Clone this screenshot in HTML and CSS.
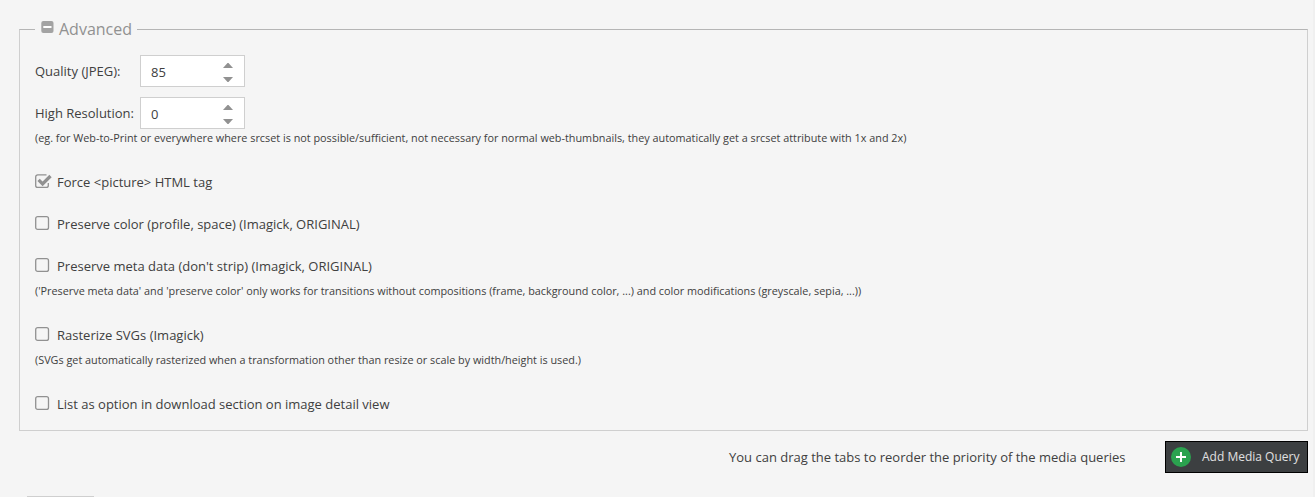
FILE: index.html
```html
<!DOCTYPE html>
<html lang="en">
<head>
  <meta charset="UTF-8">
  <meta name="viewport" content="width=device-width, initial-scale=1.0">
  <title>Thumbnail Settings</title>
  <link rel="stylesheet" href="styles.css">
</head>
<body>
  <div class="panel">
    <fieldset class="advanced">
      <legend>
        <svg class="collapse" width="13" height="12" viewBox="0 0 13 12">
          <rect x="0.3" width="12.2" height="12" rx="2" fill="#a3a3a3"></rect>
          <rect x="2.3" y="5" width="8.2" height="2" fill="#fff"></rect>
        </svg>
        <span>Advanced</span>
      </legend>

      <div class="row">
        <label class="field-label" for="quality">Quality (JPEG):</label>
        <div class="spinner">
          <input type="text" id="quality" value="85">
          <svg width="10" height="20" viewBox="0 0 10 20" fill="#919191">
            <path d="M0 6L4.5 1h1L10 6z"></path>
            <path d="M0 15h10L5.5 20h-1z"></path>
          </svg>
        </div>
      </div>

      <div class="row">
        <label class="field-label" for="resolution">High Resolution:</label>
        <div class="spinner">
          <input type="text" id="resolution" value="0">
          <svg width="10" height="20" viewBox="0 0 10 20" fill="#919191">
            <path d="M0 6L4.5 1h1L10 6z"></path>
            <path d="M0 15h10L5.5 20h-1z"></path>
          </svg>
        </div>
      </div>
      <p class="note">(eg. for Web-to-Print or everywhere where srcset is not possible/sufficient, not necessary for normal web-thumbnails, they automatically get a srcset attribute with 1x and 2x)</p>

      <div class="row check">
        <svg width="17" height="15" viewBox="0 0 17 15" fill="none" stroke="#919191">
          <path d="M11.5 0.9H2.7a2 2 0 0 0-2 2v8.5a2 2 0 0 0 2 2h8.6a2 2 0 0 0 2-2V9" stroke-width="1.3"></path>
          <path d="M3.6 5.9l4 4L15.5 2" stroke-width="3.3"></path>
        </svg>
        <span>Force &lt;picture&gt; HTML tag</span>
      </div>

      <div class="row check">
        <svg width="17" height="15" viewBox="0 0 17 15" fill="none" stroke="#919191">
          <rect x="0.7" y="0.7" width="12.8" height="12.7" rx="2" stroke-width="1.3"></rect>
        </svg>
        <span>Preserve color (profile, space) (Imagick, ORIGINAL)</span>
      </div>

      <div class="row check">
        <svg width="17" height="15" viewBox="0 0 17 15" fill="none" stroke="#919191">
          <rect x="0.7" y="0.7" width="12.8" height="12.7" rx="2" stroke-width="1.3"></rect>
        </svg>
        <span>Preserve meta data (don't strip) (Imagick, ORIGINAL)</span>
      </div>
      <p class="note">('Preserve meta data' and 'preserve color' only works for transitions without compositions (frame, background color, ...) and color modifications (greyscale, sepia, ...))</p>

      <div class="row check">
        <svg width="17" height="15" viewBox="0 0 17 15" fill="none" stroke="#919191">
          <rect x="0.7" y="0.7" width="12.8" height="12.7" rx="2" stroke-width="1.3"></rect>
        </svg>
        <span>Rasterize SVGs (Imagick)</span>
      </div>
      <p class="note">(SVGs get automatically rasterized when a transformation other than resize or scale by width/height is used.)</p>

      <div class="row check">
        <svg width="17" height="15" viewBox="0 0 17 15" fill="none" stroke="#919191">
          <rect x="0.7" y="0.7" width="12.8" height="12.7" rx="2" stroke-width="1.3"></rect>
        </svg>
        <span>List as option in download section on image detail view</span>
      </div>
    </fieldset>

    <div class="toolbar">
      <span>You can drag the tabs to reorder the priority of the media queries</span>
      <button class="btn-add" type="button">
        <svg width="20" height="20" viewBox="0 0 20 20">
          <circle cx="10" cy="10" r="10" fill="#2ba24f"></circle>
          <path d="M10 5v10M5 10h10" stroke="#fff" stroke-width="2"></path>
        </svg>
        <span>Add Media Query</span>
      </button>
    </div>

    <div class="tabs">
      <div class="tab"></div>
    </div>
  </div>
</body>
</html>
```
FILE: styles.css
```css
* {
  margin: 0;
  padding: 0;
  box-sizing: border-box;
}

body {
  height: 497px;
  overflow: hidden;
  background: #f5f5f5;
  color: #404040;
  font-family: "Open Sans", sans-serif;
  font-size: 13px;
}

.panel {
  height: 497px;
  padding: 19px 5px 0 19px;
  border-right: 2px solid #f0f0f0;
  overflow: hidden;
}

.advanced {
  height: 412px;
  padding: 15px;
  border: 1px solid #cfcfcf;
  border-top-color: #b5b5b5;
}

.advanced legend {
  display: flex;
  height: 21px;
  padding: 0 5px 0 6px;
  color: #919191;
  font-size: 16px;
  line-height: 21px;
}

.collapse {
  margin: 2px 5px 0 0;
}

.row {
  display: flex;
  align-items: center;
  height: 32px;
  margin-bottom: 10px;
}

.field-label {
  width: 105px;
  white-space: nowrap;
}

.spinner {
  display: flex;
  align-items: center;
  width: 105px;
  height: 32px;
  padding: 2px 11px 0 10px;
  background: #fff;
  border: 1px solid #cfcfcf;
}

.spinner input {
  width: 72px;
  border: none;
  outline: none;
  background: none;
  color: #404040;
  font: inherit;
}

.check svg {
  margin: -2px 5px 0 0;
}

.note {
  height: 37px;
  margin-top: -10px;
  font-size: 10.833px;
  line-height: 18px;
  white-space: nowrap;
}

.toolbar {
  display: flex;
  align-items: center;
  justify-content: flex-end;
  gap: 39.5px;
  height: 32px;
  margin-top: 10px;
}

.btn-add {
  display: flex;
  align-items: center;
  gap: 11px;
  width: 143px;
  height: 32px;
  padding-left: 5px;
  border: 1px solid #000;
  background: #3c3f41;
  color: #e0e0e0;
  font: 12px "Open Sans", sans-serif;
  white-space: nowrap;
}

.btn-add span {
  margin-top: -1px;
}

.tabs {
  margin-top: 23px;
  padding-left: 8px;
}

.tab {
  width: 67px;
  height: 32px;
  border-top: 1px solid #cfcfcf;
}
```
